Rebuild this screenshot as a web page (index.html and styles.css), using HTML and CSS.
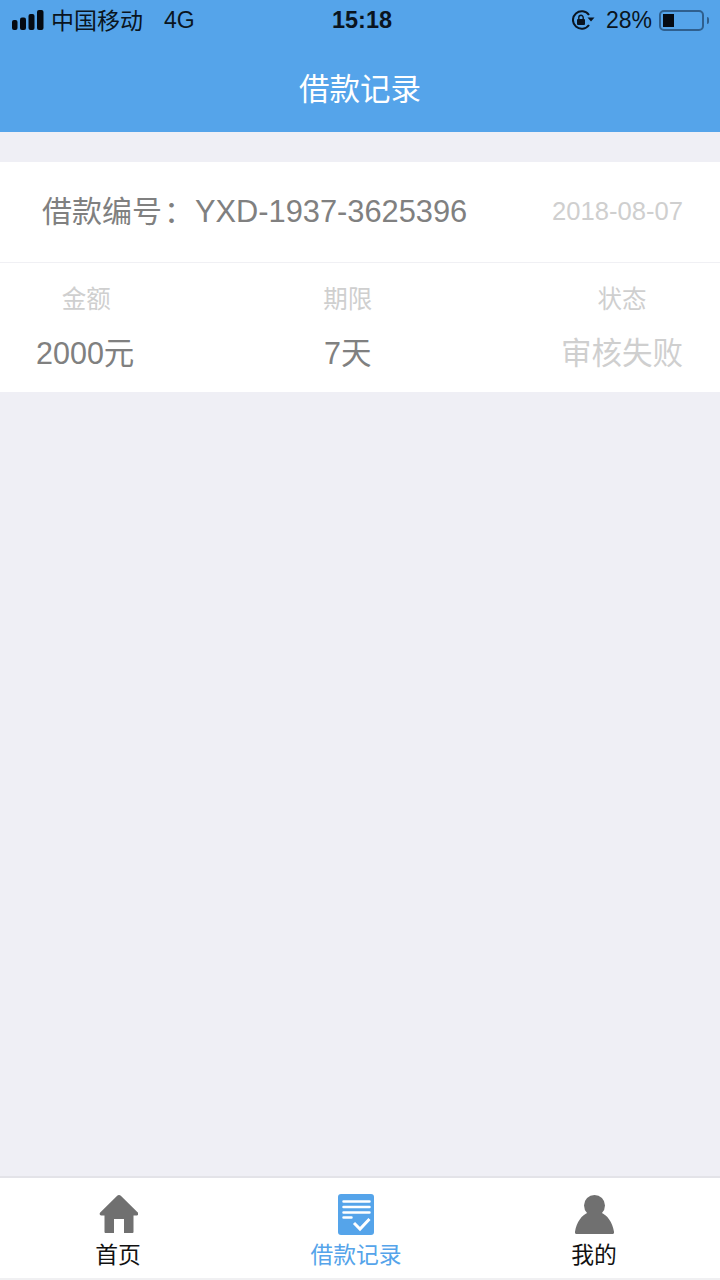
FILE: index.html
```html
<!DOCTYPE html>
<html lang="zh-CN">
<head>
  <meta charset="UTF-8">
  <meta name="viewport" content="width=device-width, initial-scale=1.0">
  <title>借款记录</title>
  <link rel="stylesheet" href="styles.css">
</head>
<body>
  <header class="top">
    <div class="status">
      <div class="status-left">
        <svg class="signal" width="32" height="21" viewBox="0 0 32 21">
          <rect x="0" y="10" width="5.500" height="10" rx="2"/>
          <rect x="8" y="7.500" width="6" height="12.500" rx="2"/>
          <rect x="16.500" y="4" width="6" height="16" rx="2"/>
          <rect x="25" y="0" width="6.500" height="20" rx="2"/>
        </svg>
        <span class="carrier">中国移动</span>
        <span class="network">4G</span>
      </div>
      <div class="clock">15:18</div>
      <div class="status-right">
        <svg class="lock" width="23" height="20" viewBox="0 0 23 20">
          <path d="M17 5A8.800 8.800 0 1 0 17 15" fill="none" stroke="#0a1420" stroke-width="2"/>
          <path d="M15.500 7.500h7l-3.500 4z" fill="#0a1420"/>
          <rect x="5" y="9" width="8" height="6" rx="1" fill="#0a1420"/>
          <path d="M6.800 9.500V7.500a2.200 2.200 0 0 1 4.400 0v2" fill="none" stroke="#0a1420" stroke-width="1.400"/>
        </svg>
        <span class="percent">28%</span>
        <div class="battery"><div class="battery-level"></div></div>
        <div class="battery-tip"></div>
      </div>
    </div>
    <h1 class="title">借款记录</h1>
  </header>

  <main class="content">
    <section class="record">
      <div class="record-head">
        <span class="record-no">借款编号<span class="colon">：</span><span class="record-code">YXD-1937-3625396</span></span>
        <span class="record-date">2018-08-07</span>
      </div>
      <div class="record-body">
        <div class="cell">
          <span class="label">金额</span>
          <span class="value">2000元</span>
        </div>
        <div class="cell">
          <span class="label">期限</span>
          <span class="value">7天</span>
        </div>
        <div class="cell">
          <span class="label">状态</span>
          <span class="value value-state">审核失败</span>
        </div>
      </div>
    </section>
  </main>

  <nav class="tabs">
    <a class="tab">
      <svg width="40" height="41" viewBox="-1 0 40 41">
        <path d="M20 1a2.500 2.500 0 0 1 1.800.7L38.800 18.500c1 1 .5 3-1 3H34.500V38a1 1 0 0 1-1 1H25V25H15v14H6.500a1 1 0 0 1-1-1V21.500H2.200c-1.500 0-2-2-1-3L18.200 1.700A2.500 2.500 0 0 1 20 1z" fill="#707070"/>
      </svg>
      <span>首页</span>
    </a>
    <a class="tab tab-active">
      <svg width="38" height="41" viewBox="0 0 38 41">
        <rect x="1" y="0" width="36" height="41" rx="3" fill="#55a4ea"/>
        <path d="M6.500 7.500h26M6.500 13h26M6.500 18.500h26M6.500 23.500h8" stroke="#fff" stroke-width="2.500" stroke-linecap="round"/>
        <path d="M17 29l6 6 9.500-10" fill="none" stroke="#fff" stroke-width="3"/>
      </svg>
      <span>借款记录</span>
    </a>
    <a class="tab">
      <svg width="41" height="41" viewBox="0 0 41 41">
        <circle cx="20.500" cy="11.500" r="10.500" fill="#707070"/>
        <path d="M3 40a2 2 0 0 1-2-2.300C2.500 28 8 21 14 18.500h13c6 2.500 11.500 9.500 13 19.200a2 2 0 0 1-2 2.300z" fill="#707070"/>
      </svg>
      <span>我的</span>
    </a>
  </nav>
</body>
</html>
```

FILE: styles.css
```css
* {
  margin: 0;
  padding: 0;
  box-sizing: border-box;
}

html, body {
  height: 100%;
}

body {
  width: 720px;
  height: 1280px;
  display: flex;
  flex-direction: column;
  overflow: hidden;
  background-color: #efeff5;
  font-family: "Liberation Sans", "Noto Sans CJK SC", sans-serif;
}

/* top bar */
.top {
  height: 132px;
  background-color: #55a4ea;
  flex-shrink: 0;
}

.status {
  height: 40px;
  padding: 0 11px 0 12px;
  display: flex;
  align-items: center;
  position: relative;
  color: #0a1420;
  font-size: 23px;
}

.status-left {
  display: flex;
  align-items: center;
}

.signal {
  fill: #050a12;
  margin-right: 7px;
}

.carrier {
  padding-bottom: 3px;
}

.network {
  margin-left: 21px;
}

.clock {
  position: absolute;
  left: 4px;
  right: 0;
  top: 7px;
  text-align: center;
  font-size: 23.500px;
  font-weight: 700;
}

.status-right {
  margin-left: auto;
  display: flex;
  align-items: center;
}

.lock {
  margin-right: 11px;
}

.percent {
  margin-right: 7px;
}

.battery {
  width: 45px;
  height: 21px;
  border: 2px solid #2f5f8e;
  border-radius: 5px;
  padding: 2px;
}

.battery-level {
  width: 11px;
  height: 100%;
  background-color: #050a12;
}

.battery-tip {
  width: 2px;
  height: 7px;
  margin-left: 3px;
  background-color: #2f5f8e;
  border-radius: 0 2px 2px 0;
}

.title {
  height: 92px;
  line-height: 98px;
  text-align: center;
  color: #fff;
  font-size: 30.500px;
  font-weight: 400;
}

/* record card */
.content {
  flex: 1;
  padding-top: 30px;
}

.record {
  background-color: #fff;
}

.record-head {
  height: 101px;
  padding: 0 37px 2px 42px;
  display: flex;
  align-items: center;
  justify-content: space-between;
  border-bottom: 1px solid #f0f0f4;
}

.record-no {
  padding-bottom: 4px;
  font-size: 30px;
  color: #808080;
}

.colon {
  padding-left: 2px;
  margin-right: 1px;
}

.record-code {
  font-size: 30.800px;
}

.record-date {
  font-size: 25.600px;
  color: #cfcfcf;
}

.record-body {
  height: 129px;
  padding: 0 37px 0 36px;
  display: flex;
  justify-content: space-between;
}

.cell {
  display: flex;
  flex-direction: column;
  align-items: center;
  padding-top: 22px;
}

.cell:first-child .label {
  margin-left: 2px;
}

.label {
  font-size: 24.500px;
  line-height: 30px;
  color: #cfcfcf;
}

.value {
  margin-top: 20px;
  font-size: 30.500px;
  line-height: 36px;
  color: #808080;
}

.value-state {
  color: #cfcfcf;
}

/* bottom tabs */
.tabs {
  height: 104px;
  flex-shrink: 0;
  padding-left: 18px;
  background-color: #fff;
  border-top: 2px solid #e3e3e8;
  border-bottom: 2px solid #f0f0f2;
  display: flex;
  gap: 38px;
}

.tab {
  width: 200px;
  padding-top: 16px;
  display: flex;
  flex-direction: column;
  align-items: center;
  color: #111;
  font-size: 22.800px;
}

.tab span {
  margin-top: 2px;
}

.tab-active {
  color: #55a4ea;
}
```
